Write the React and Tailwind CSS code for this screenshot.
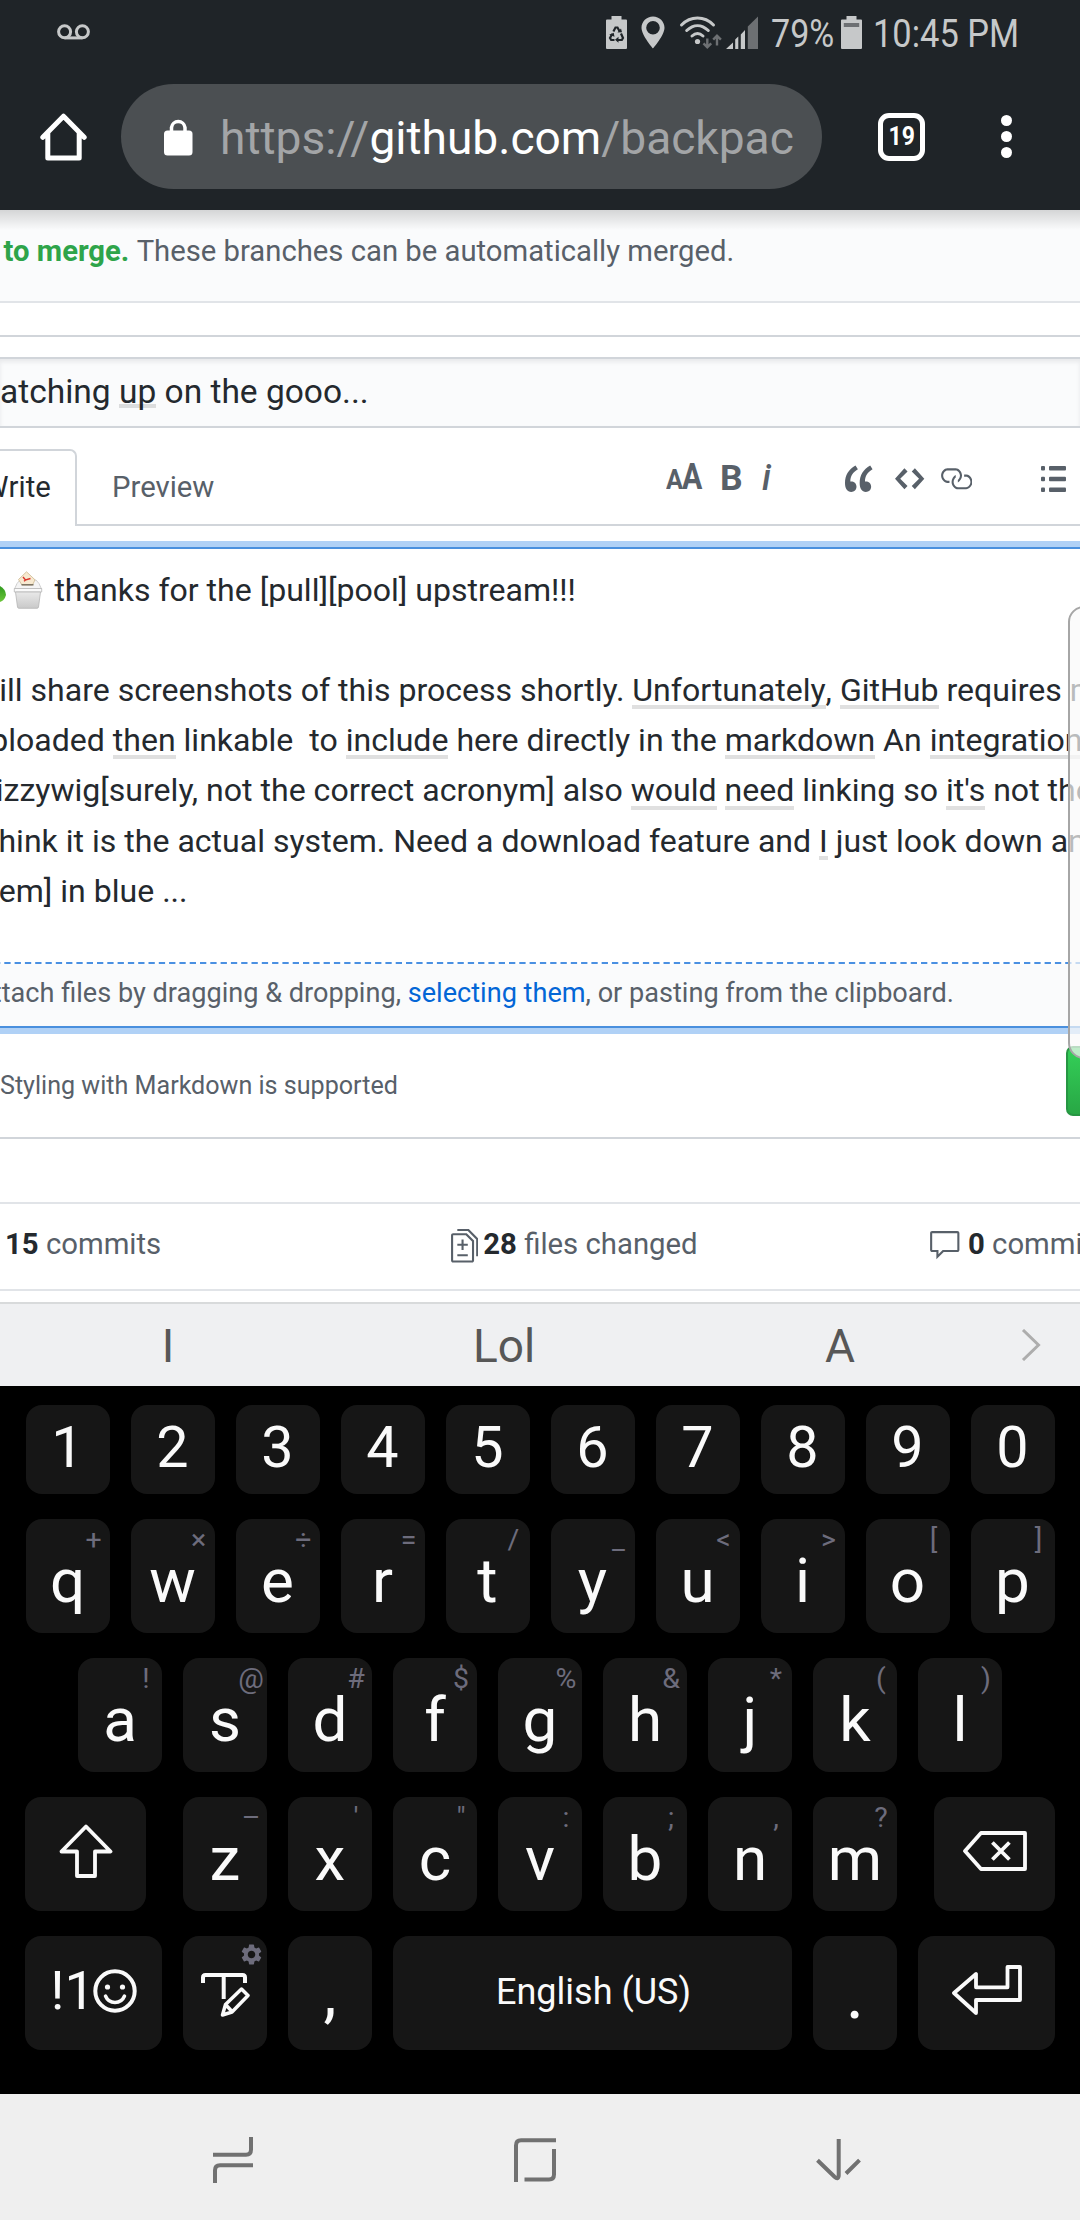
import React from "react";
import { MdSettings } from "react-icons/md";

/* Text that runs off the left edge: the box has no width, so its content spills leftwards. */
function Lead({ children }) {
  return <span className="flex w-0 shrink-0 justify-end whitespace-pre">{children}</span>;
}

/* Word marked by the keyboard's grammar check. */
function Mark({ children }) {
  return (
    <span className="relative inline-block">
      {children}
      <span className="absolute inset-x-0 bottom-[6px] h-1 bg-black/12" />
    </span>
  );
}

function StatusBar() {
  return (
    <div className="flex h-[84px] items-start pt-4 text-[#c6c8c9]">
      <svg className="mt-2 ml-[57px] h-4 w-[34px]" viewBox="0 0 34 16" fill="none" stroke="currentColor" strokeWidth="3">
        <circle cx="7.6" cy="7.8" r="6" />
        <circle cx="25.4" cy="7.8" r="6" />
        <path d="M7.6 13.9H25.4" />
      </svg>
      <svg className="ml-[515px] h-[33px] w-[21px]" viewBox="0 0 21 33">
        <path fill="currentColor" d="M5.5 0h10v3.500H20a1 1 0 0 1 1 1V32a1 1 0 0 1-1 1H1a1 1 0 0 1-1-1V4.500a1 1 0 0 1 1-1h4.500z" />
        <g fill="none" stroke="#1f2428" strokeWidth="2.200">
          <path d="M7.400 15.500L9.500 11.500h2l2.200 4" />
          <path d="M15 17.500l2 4.500-1.200 2h-4" />
          <path d="M8.500 24H5.200L4 22l2.200-4" />
        </g>
        <path fill="#1f2428" d="M11.500 16.500l4.500-.2-1-3.800zM12.500 20.800v6l-3.500-3zM3.200 18.800l4.500-2 .8 4z" />
      </svg>
      <svg className="ml-[14px] h-[33px] w-6" viewBox="0 0 24 33">
        <path fill="currentColor" fillRule="evenodd" d="M12 .5C5.600.5.500 5.500.500 11.800.500 19.500 12 32.500 12 32.500S23.500 19.500 23.500 11.800C23.500 5.500 18.400.500 12 .500zM12 5a6.800 6.800 0 1 1 0 13.600A6.800 6.800 0 0 1 12 5z" />
      </svg>
      <svg className="ml-[14px] h-[34px] w-[43px]" viewBox="0 0 43 34" fill="none">
        <g stroke="currentColor" strokeWidth="3" strokeLinecap="round">
          <path d="M2.500 9C11.500-.3 25.500-.3 34.500 9" />
          <path d="M7.700 14.500C14.500 8 22.500 8 29.300 14.500" />
          <path d="M13 20C16.500 16.800 20.500 16.800 24 20" />
        </g>
        <circle cx="18.500" cy="25.500" r="2.600" fill="currentColor" />
        <g stroke="#6d7073" strokeWidth="2.400">
          <path d="M28.300 22.500V31M24.500 27.300L28.300 31.300L32.200 27.300" />
          <path d="M38 29.500V20M34.200 23.700L38 19.700L41.900 23.700" />
        </g>
      </svg>
      <svg className="ml-1 h-[33px] w-8" viewBox="0 0 32 33">
        <path fill="currentColor" d="M0 33L7 26.500V33zM9.200 33V23.500L12.300 20.500V33zM14.800 33V18.500L19 14V33z" />
        <path fill="#6d7073" d="M21.800 33V10.500L32 .5V33z" />
      </svg>
      <span className="mt-[-4px] ml-[13px] w-[60px] origin-left scale-x-[0.885] text-[38.500px] leading-[44px] whitespace-nowrap">79%</span>
      <svg className="ml-[10px] h-[33px] w-[21px]" viewBox="0 0 21 33">
        <path fill="currentColor" d="M5.500 0h10v3.500H20a1 1 0 0 1 1 1V32a1 1 0 0 1-1 1H1a1 1 0 0 1-1-1V4.500a1 1 0 0 1 1-1h4.500z" />
        <path fill="#6d7073" d="M2.800 7h15.400v4H2.800z" />
      </svg>
      <span className="mt-[-4px] ml-[11px] origin-left scale-x-[0.895] text-[38.500px] leading-[44px] whitespace-nowrap">10:45 PM</span>
    </div>
  );
}

function AddressBar() {
  return (
    <div className="flex h-[105px] items-center">
      <svg className="ml-10 h-12 w-[47px]" viewBox="0 0 47 48" fill="none" stroke="#fff" strokeWidth="5" strokeLinecap="round" strokeLinejoin="round">
        <path d="M2.800 24.300L23.500 3.200L44.200 24.300M7.800 20V45H39.200V20" />
      </svg>
      <div className="ml-[34px] flex h-[105px] w-[701px] items-center rounded-full bg-[#4b4f52]">
        <svg className="ml-[43px] h-[38px] w-[29px]" viewBox="0 0 29 38">
          <rect x="0" y="12.500" width="28.500" height="25" rx="3.500" fill="#fff" />
          <path d="M7.500 14V9.500a6.800 6.800 0 0 1 13.500 0V14" fill="none" stroke="#fff" strokeWidth="3.500" />
        </svg>
        <span className="mt-[3px] ml-[27px] text-[46.100px] leading-[54px] whitespace-nowrap text-[#a3a5a7]">
          https://<span className="text-white">github.com</span>/backpac
        </span>
      </div>
      <div className="ml-14 flex h-[48px] w-[47px] items-center justify-center rounded-[11px] border-[5px] border-white">
        <span className="scale-x-90 text-[25.500px] leading-none font-bold text-white">19</span>
      </div>
      <div className="ml-[76px] flex flex-col gap-[5px]">
        <span className="h-[11px] w-[11px] rounded-full bg-white" />
        <span className="h-[11px] w-[11px] rounded-full bg-white" />
        <span className="h-[11px] w-[11px] rounded-full bg-white" />
      </div>
    </div>
  );
}

function FormatBar() {
  return (
    <div className="ml-auto flex h-[33px] w-[414px] items-center font-bold text-[#586069]">
      <div className="flex w-[37px] items-baseline leading-[33px]">
        <span className="w-[16px] origin-left scale-x-90 text-[28px]">A</span>
        <span className="origin-left scale-x-[0.84] text-[36px] leading-[33px]">A</span>
      </div>
      <span className="ml-[17px] w-5 text-[35.500px] leading-[33px]">B</span>
      <span className="ml-[22px] w-[13px] text-[36px] leading-[33px] font-medium italic">i</span>
      <svg className="ml-[70px] h-[33.500px] w-[29.300px]" viewBox="0 0 14 16" fill="currentColor">
        <path d="M6.160 3.500C3.730 5.060 2.550 6.670 2.550 9.360c.16-.05.3-.05.44-.05 1.270 0 2.500.86 2.500 2.410 0 1.610-1.030 2.610-2.500 2.610C1.090 14.330 0 12.810 0 10.080c0-3.800 1.750-6.530 5.020-8.420L6.160 3.500zm7 0c-2.430 1.560-3.610 3.170-3.610 5.860.16-.05.3-.05.44-.05 1.270 0 2.500.86 2.500 2.410 0 1.610-1.030 2.610-2.500 2.610-1.890 0-2.980-1.520-2.980-4.250 0-3.800 1.750-6.530 5.020-8.420l1.140 1.840h-.01z" />
      </svg>
      <svg className="ml-[21px] h-[33.500px] w-[29.300px]" viewBox="0 0 14 16" fill="currentColor">
        <path d="M9.500 3L8 4.500 11.500 8 8 11.500 9.500 13 14 8 9.500 3zm-5 0L0 8l4.500 5L6 11.500 2.500 8 6 4.500 4.500 3z" />
      </svg>
      <svg className="ml-[14px] h-[33.500px] w-[33.500px]" viewBox="0 0 16 16" fill="currentColor">
        <path d="M4 9h1v1H4c-1.500 0-3-1.690-3-3.500S2.550 3 4 3h4c1.450 0 3 1.690 3 3.500 0 1.410-.91 2.720-2 3.250V8.590c.58-.45 1-1.270 1-2.090C10 5.220 8.980 4 8 4H4c-.98 0-2 1.220-2 2.500S3 9 4 9zm9-3h-1v1h1c1 0 2 1.220 2 2.500S13.980 12 13 12H9c-.98 0-2-1.220-2-2.500 0-.83.42-1.640 1-2.090V6.250c-1.090.53-2 1.840-2 3.250C6 11.310 7.550 13 9 13h4c1.450 0 3-1.690 3-3.500S14.500 6 13 6z" />
      </svg>
      <svg className="ml-[69px] h-[26px] w-[25px]" viewBox="0 0 25 26" fill="currentColor">
        <rect x="0" y="0" width="4" height="4.500" rx="1" />
        <rect x="0" y="10.800" width="4" height="4.500" rx="1" />
        <rect x="0" y="21.500" width="4" height="4.500" rx="1" />
        <rect x="8" y="0" width="17" height="4.500" rx="1" />
        <rect x="8" y="10.800" width="17" height="4.500" rx="1" />
        <rect x="8" y="21.500" width="17" height="4.500" rx="1" />
      </svg>
    </div>
  );
}

function LidEmoji() {
  return (
    <svg className="h-[38px] w-[43px] shrink-0" viewBox="0 0 43 38">
      <defs>
        <linearGradient id="bin" x1="0" y1="0" x2="0" y2="1">
          <stop offset="0" stopColor="#e9e9e9" />
          <stop offset="1" stopColor="#c9c9c9" />
        </linearGradient>
        <linearGradient id="leaf" x1="0" y1="0" x2="0" y2="1">
          <stop offset="0" stopColor="#2f9a1e" />
          <stop offset="1" stopColor="#6cc63a" />
        </linearGradient>
      </defs>
      <path d="M0 15Q5.500 18 6 24Q4.500 29.500 0 31z" fill="url(#leaf)" />
      <path d="M17 12.500L20 9H36L39 12.500L41.500 18H14.500z" fill="#f4f4f4" stroke="#c4c4c4" strokeWidth=".8" />
      <path d="M18.500 8.500L26.500 .800L35 8.800L32.500 14H22z" fill="#f7e9d0" stroke="#cdb88e" strokeWidth=".8" />
      <path d="M23 6L25.500 9L30.500 7.500M24 10.300L26 8.700" fill="none" stroke="#d8342a" strokeWidth="1.400" />
      <path d="M21.500 13.800H33.500" stroke="#6d6557" strokeWidth="1.300" />
      <path d="M14.300 17.500H41.700V21H14.300z" fill="#fafafa" stroke="#b5b5b5" strokeWidth=".8" />
      <path d="M15.500 21H40.500L38.500 36Q38.300 37.300 37 37.300H19Q17.700 37.300 17.500 36z" fill="url(#bin)" stroke="#b5b5b5" strokeWidth=".8" />
    </svg>
  );
}

function Line({ start, children }) {
  return (
    <div className="flex h-[50.200px] items-center whitespace-pre" style={{ paddingLeft: start }}>
      {children}
    </div>
  );
}

function Editor() {
  return (
    <div className="h-[493px] border-y-[6px] border-[#b0d1f6]">
      <div className="flex h-full flex-col border-y-2 border-[#4a90de]">
        <div className="h-[413px] pt-[15.700px] text-[32.050px] leading-[50.200px] text-[#24292e]">
          <Line start={0}>
            <LidEmoji />
            <span className="ml-[11.400px]">thanks for the [pull][pool] upstream!!!</span>
          </Line>
          <Line start={0} />
          <Line start={7}>
            <Lead>I wi</Lead>
            <span>
              ll share screenshots of this process shortly. <Mark>Unfortunately</Mark>, <Mark>GitHub</Mark> requires media
            </span>
          </Line>
          <Line start={112.800}>
            <Lead>uploaded </Lead>
            <span>
              <Mark>then</Mark> linkable{"  "}to <Mark>include</Mark> here directly in the <Mark>markdown</Mark> An <Mark>integration</Mark>
            </span>
          </Line>
          <Line start={3.500}>
            <Lead>wi</Lead>
            <span>
              zzywig[surely, not the correct acronym] also <Mark>would</Mark> <Mark>need</Mark> linking so <Mark>it's</Mark> not the
            </span>
          </Line>
          <Line start={65.800}>
            <Lead>think </Lead>
            <span>
              it is the actual system. Need a download feature and <Mark>I</Mark> just look down and
            </span>
          </Line>
          <Line start={60.300}>
            <Lead>[system] </Lead>
            <span>in blue ...</span>
          </Line>
        </div>
        <svg className="block h-[2px] w-full shrink-0" viewBox="0 0 1080 2">
          <path d="M-6 1H1080" stroke="#4a90e2" strokeWidth="2" strokeDasharray="6.300 4" />
        </svg>
        <div className="flex h-[62px] bg-[#fafbfc] pt-[9px] pl-[61.200px] text-[27.120px] leading-10 whitespace-pre text-[#586069]">
          <Lead>Attach </Lead>
          <span>
            files by dragging &amp; dropping, <span className="text-[#0366d6]">selecting them</span>, or pasting from the clipboard.
          </span>
        </div>
      </div>
    </div>
  );
}

function Stats() {
  return (
    <div className="flex h-[89px] border-y-2 border-[#e1e4e8] pt-[18px] text-[29.300px] leading-[44px] whitespace-nowrap text-[#586069]">
      <span className="w-[451px] shrink-0 pl-[5px]">
        <b className="text-[#24292e]">15</b> commits
      </span>
      <svg className="mt-[7px] h-[33.500px] w-[27.300px] shrink-0" viewBox="0 0 13 16" fill="currentColor">
        <path d="M6 7h2v1H6v2H5V8H3V7h2V5h1v2zm-3 6h5v-1H3v1zM7.500 2L11 5.500V15c0 .55-.45 1-1 1H1c-.55 0-1-.45-1-1V3c0-.55.45-1 1-1h6.500zM10 6L7 3H1v12h9V6zM8.500 0H3v1h5l4 4v8h1V4.500L8.500 0z" />
      </svg>
      <span className="ml-[5px] w-[444.700px] shrink-0">
        <b className="text-[#24292e]">28</b> files changed
      </span>
      <svg className="mt-[7px] h-[33.500px] w-[33.500px] shrink-0" viewBox="0 0 16 16" fill="currentColor">
        <path d="M14 1H2c-.55 0-1 .45-1 1v8c0 .55.45 1 1 1h2v3.500L7.500 11H14c.55 0 1-.45 1-1V2c0-.55-.45-1-1-1zm0 9H7l-2 2v-2H2V2h12v8z" />
      </svg>
      <span className="ml-[6.500px]">
        <b className="text-[#24292e]">0</b> commit comments
      </span>
    </div>
  );
}

function Page() {
  return (
    <div className="relative h-[1092px] overflow-hidden bg-white">
      <div className="absolute inset-x-0 top-0 h-5 bg-linear-to-b from-black/15 to-transparent" />
      <div className="flex h-[93px] border-b-2 border-[#e1e4e8] bg-[#fafbfc] pt-[19px] pl-[3.500px] text-[29.250px] leading-[44px] whitespace-pre text-[#586069]">
        <b className="text-[#2ea44a]">to merge. </b>
        <span>These branches can be automatically merged.</span>
      </div>
      <div className="h-[34px] border-b-2 border-[#d1d5da]" />
      <div className="h-5" />
      <div className="flex h-[71px] border-y-2 border-[#d1d5da] bg-[#fafbfc] pt-[11px] text-[33.500px] leading-[44px] whitespace-pre text-[#24292e] shadow-[inset_0_3px_4px_rgba(27,31,35,0.08)]">
        <Lead>C</Lead>
        <span>
          atching <Mark>up</Mark> on the gooo...
        </span>
      </div>
      <div className="mt-[21px] flex h-[77px] items-stretch border-b-2 border-[#d1d5da] text-[29.300px] leading-[44px] text-[#586069]">
        <div className="-mb-[2px] flex w-[77px] rounded-tr-[7px] border-t-2 border-r-2 border-[#d1d5da] bg-white pt-[14px] pl-[8.600px] text-[#24292e]">
          <Lead>W</Lead>
          <span>rite</span>
        </div>
        <span className="pt-4 pl-[35px]">Preview</span>
        <div className="flex flex-1 items-start pt-[13px]">
          <FormatBar />
        </div>
      </div>
      <div className="mt-[15px]">
        <Editor />
      </div>
      <div className="flex h-[105px] justify-between border-b-2 border-[#d1d5da] text-[25.100px] leading-10 text-[#586069]">
        <span className="mt-[32px]">Styling with Markdown is supported</span>
        <span className="mt-[12px] h-[70px] w-[14px] rounded-l-[7px] border-y-2 border-l-2 border-[#279643] bg-linear-to-b from-[#34d058] to-[#28a745]" />
      </div>
      <div className="mt-[63px]">
        <Stats />
      </div>
      <div className="absolute top-[396px] -right-5 h-[453px] w-8 rounded-[22px] border-2 border-[#a6a6a6] bg-[#fafafa]/70" />
    </div>
  );
}

function Suggestions() {
  return (
    <div className="flex h-[84px] items-center border-t-2 border-[#d8dadb] bg-[#eff0f2] text-[46px] leading-[60px] text-[#575757]">
      <span className="mt-[2px] w-[336px] text-center">I</span>
      <span className="mt-[2px] w-[336px] text-center">Lol</span>
      <span className="mt-[2px] w-[336px] text-center">A</span>
      <svg className="ml-[13px] h-8 w-5" viewBox="0 0 20 32" fill="none" stroke="#adadad" strokeWidth="3">
        <path d="M2 1L17.500 16L2 31" />
      </svg>
    </div>
  );
}

function Key({ width = "w-[84px]", className = "", hint, children }) {
  return (
    <div className={"relative flex shrink-0 items-center justify-center rounded-2xl bg-[#161616] text-[#fafafa] " + width + " " + className}>
      {children}
      {hint && (
        <span className="absolute top-[1px] right-[-4px] flex h-10 w-10 items-center justify-center text-[28.500px] leading-10 text-[#6d6c7c]">
          {hint}
        </span>
      )}
    </div>
  );
}

function LetterRow({ pairs }) {
  return pairs.map(([c, h]) => (
    <Key key={c} hint={h} className="pt-[10px] text-[62px] leading-none">
      {c}
    </Key>
  ));
}

const DIGITS = "1234567890".split("");
const TOP = [["q", "+"], ["w", "×"], ["e", "÷"], ["r", "="], ["t", "/"], ["y", "_"], ["u", "<"], ["i", ">"], ["o", "["], ["p", "]"]];
const HOME = [["a", "!"], ["s", "@"], ["d", "#"], ["f", "$"], ["g", "%"], ["h", "&"], ["j", "*"], ["k", "("], ["l", ")"]];
const BOTTOM = [["z", "–"], ["x", "'"], ["c", '"'], ["v", ":"], ["b", ";"], ["n", ","], ["m", "?"]];

function Keyboard() {
  return (
    <div className="flex h-[708px] flex-col gap-[25px] bg-black pt-[19px]">
      <div className="flex h-[89px] justify-center gap-[21px]">
        {DIGITS.map((d) => (
          <Key key={d} className="pb-1 text-[57.500px] leading-none">
            {d}
          </Key>
        ))}
      </div>
      <div className="flex h-[114px] justify-center gap-[21px]">
        <LetterRow pairs={TOP} />
      </div>
      <div className="flex h-[114px] justify-center gap-[21px]">
        <LetterRow pairs={HOME} />
      </div>
      <div className="flex h-[114px] justify-center gap-[21px]">
        <Key width="w-[121px]" className="mr-4 pb-[6px]">
          <svg className="h-[54px] w-[54px]" viewBox="0 0 54 54" fill="none" stroke="currentColor" strokeWidth="3.800" strokeLinejoin="round">
            <path d="M27 2.500L51.500 27.500H36V52H18V27.500H2.500z" />
          </svg>
        </Key>
        <LetterRow pairs={BOTTOM} />
        <Key width="w-[121px]" className="ml-4 pb-[6px]">
          <svg className="h-10 w-16" viewBox="0 0 64 40" fill="none" stroke="currentColor" strokeWidth="3.800" strokeLinejoin="round">
            <path d="M18 2H62V38H18L2 20z" />
            <path d="M29.400 11.500L46.400 28.500M46.400 11.500L29.400 28.500" />
          </svg>
        </Key>
      </div>
      <div className="flex h-[114px] justify-center gap-[21px]">
        <Key width="w-[137px]" className="pb-[5px] text-[54px] leading-none">
          <span className="w-[42px]">!1</span>
          <svg className="h-11 w-11" viewBox="0 0 44 44" fill="none" stroke="currentColor" strokeWidth="4">
            <circle cx="22" cy="22" r="19.700" />
            <path d="M12.500 27C16 35.500 28 35.500 31.500 27" strokeLinecap="round" strokeWidth="3.500" />
            <circle cx="14.500" cy="18" r="2.600" fill="currentColor" stroke="none" />
            <circle cx="29.500" cy="18" r="2.600" fill="currentColor" stroke="none" />
          </svg>
        </Key>
        <Key hint={<MdSettings className="-mt-[6px] h-[25px] w-[25px] shrink-0" />} className="pt-1">
          <svg className="h-11 w-[49px]" viewBox="0 0 49 44" fill="none" stroke="currentColor" strokeWidth="4">
            <path d="M2 10V4.500Q2 2 4.500 2H41.500Q44 2 44 4.500V10M22.700 2V26" />
            <path d="M24.500 31.500L40.500 16L47 22.500L31 39L21.500 42zM24.500 31.500L31 38.500" strokeWidth="3.500" strokeLinejoin="round" />
          </svg>
        </Key>
        <Key className="text-[66px] leading-none">,</Key>
        <Key width="w-[399px]" className="pb-[3px] pl-[2px] text-[36px] leading-none">
          English (US)
        </Key>
        <Key className="pt-[2px] text-[70px] leading-none">.</Key>
        <Key width="w-[137px]" className="pb-[6px]">
          <svg className="h-[50px] w-[70px]" viewBox="0 0 70 50" fill="none" stroke="currentColor" strokeWidth="3.800" strokeLinejoin="round">
            <path d="M2 28L24 9V22.300H55.500V2H68V35H24V48z" />
          </svg>
        </Key>
      </div>
    </div>
  );
}

function NavBar() {
  return (
    <div className="flex h-[126px] items-center bg-[#efefef] pt-[6px]">
      <svg className="ml-[213px] h-[46px] w-10" viewBox="0 0 40 46" fill="none" stroke="#717171" strokeWidth="4">
        <path d="M0 17.700H33Q38 17.700 38 12.500V0M2 46V33.300Q2 28.200 7 28.200H40" />
      </svg>
      <svg className="ml-[261px] h-11 w-[42px]" viewBox="0 0 42 44" fill="none" stroke="#717171" strokeWidth="4">
        <path d="M2 44V7.500Q2 2.200 7 2.200H42M10.500 41.500H35Q40 41.500 40 36.500V11" />
      </svg>
      <svg className="ml-[260px] h-[42px] w-[45px]" viewBox="0 0 45 42" fill="none" stroke="#717171" strokeWidth="4">
        <path d="M22.700 0V37Q22 41 18.500 37.800L1.500 21.200M43.500 21.200L30 34.500" />
      </svg>
    </div>
  );
}

export default function App() {
  return (
    <div className="h-[2220px] w-[1080px] overflow-hidden bg-white font-['Roboto',sans-serif]">
      <div className="h-[210px] bg-[#1f2428]">
        <StatusBar />
        <AddressBar />
      </div>
      <Page />
      <Suggestions />
      <Keyboard />
      <NavBar />
    </div>
  );
}
